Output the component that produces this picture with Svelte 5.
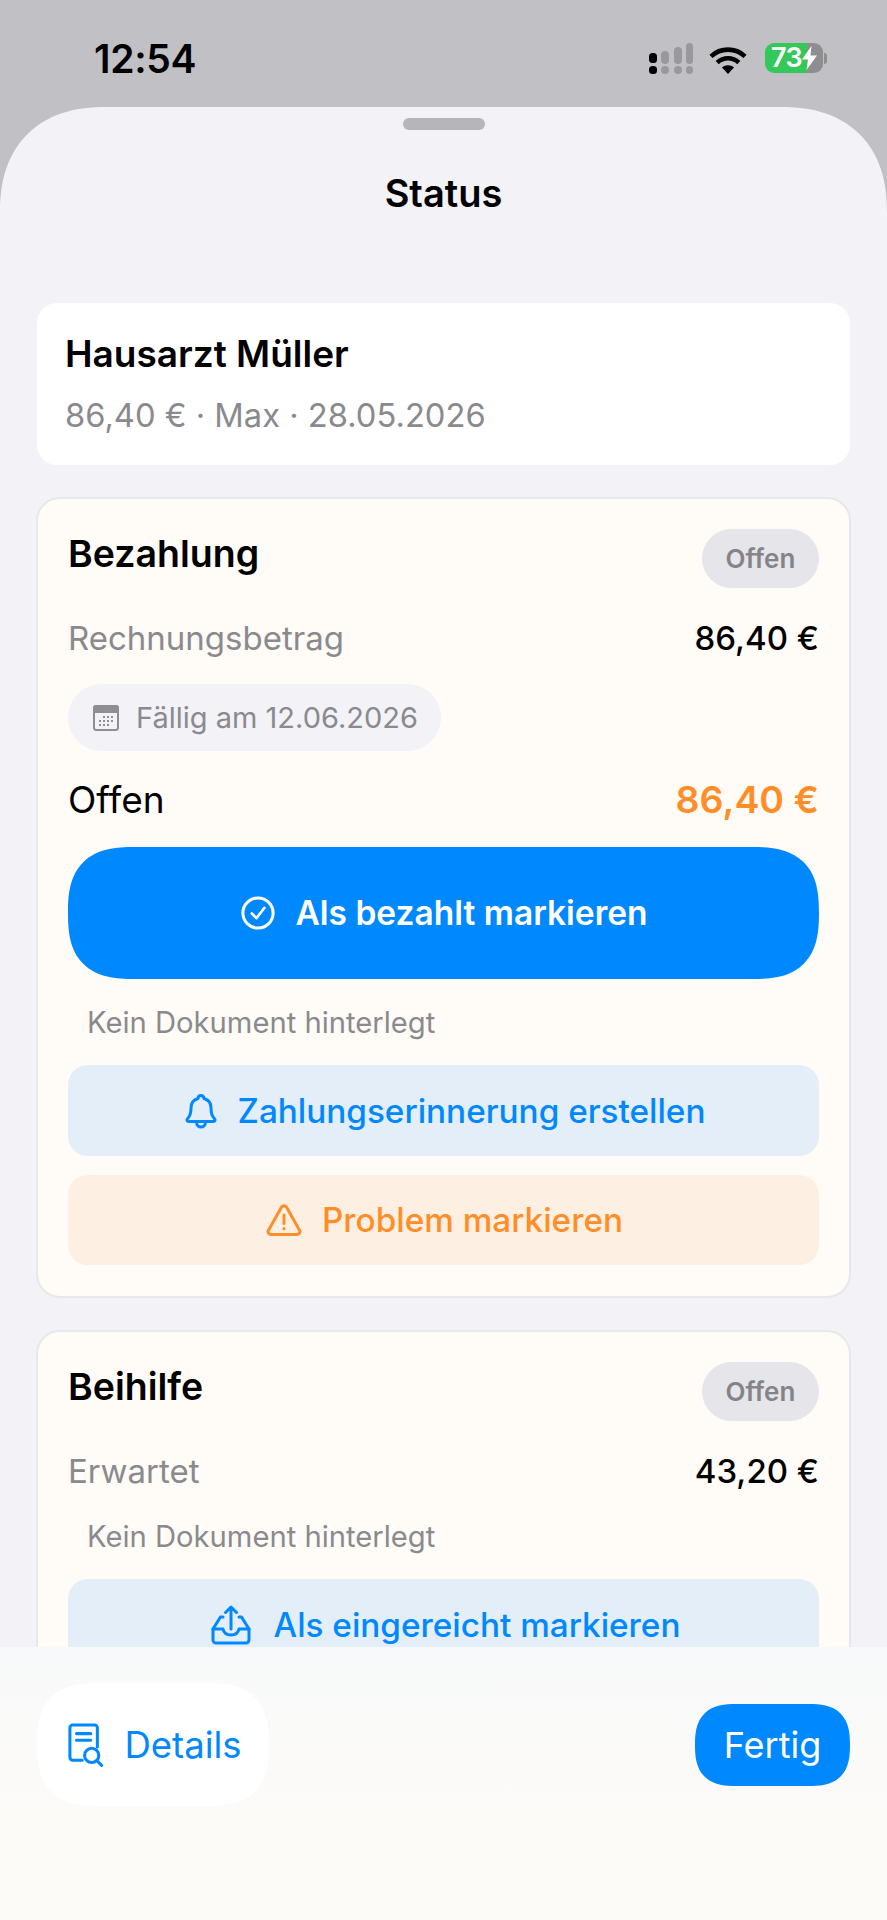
<script lang="ts">
  const blue = '#0088ff';
</script>

<div class="page">
  <header class="status">
    <span class="time">12:54</span>
    <div class="indicators">
      <svg class="signal" width="45" height="32" viewBox="0 0 45 32">
        <g fill="#98989d">
          <rect x="13" y="8" width="8" height="13" rx="4" />
          <rect x="26" y="4" width="8" height="17" rx="4" />
          <rect x="38" y="0" width="7" height="21" rx="3.5" />
          <rect x="13" y="23" width="8" height="8" rx="4" />
          <rect x="26" y="23" width="8" height="8" rx="4" />
          <rect x="38" y="23" width="7" height="8" rx="3.5" />
        </g>
        <g fill="#000">
          <rect x="1" y="10" width="8" height="10" rx="3.5" />
          <rect x="1" y="23" width="8" height="8" rx="3.5" />
        </g>
      </svg>
      <svg class="wifi" width="38" height="27" viewBox="0 0 38 27" fill="none" stroke="#000" stroke-width="4.6">
        <path d="M2 9.4C11.5 .4 26.5 .4 36 9.4" />
        <path d="M8.2 15.6C14.4 9.8 23.6 9.8 29.8 15.6" />
        <path d="M19 27l-6-6.4c3.4-3 8.6-3 12 0z" fill="#000" stroke="none" />
      </svg>
      <div class="battery">
        <div class="battery-body">
          <span class="level">73</span>
          <svg class="bolt" width="15" height="24" viewBox="0 0 15 24"><path d="M9.5 0L0 13.5h6L4.5 24 15 9.5H8.5z" fill="#fff" /></svg>
        </div>
        <span class="nub"></span>
      </div>
    </div>
  </header>

  <main class="sheet">
    <div class="handle"></div>
    <h1>Status</h1>

    <section class="summary">
      <h2>Hausarzt Müller</h2>
      <p>86,40 € · Max · 28.05.2026</p>
    </section>

    <section class="card">
      <div class="card-head">
        <h3>Bezahlung</h3>
        <span class="badge">Offen</span>
      </div>
      <div class="row muted-row">
        <span class="label">Rechnungsbetrag</span>
        <span class="value">86,40 €</span>
      </div>
      <div class="due">
        <svg width="26" height="26" viewBox="0 0 26 26">
          <path d="M3 0h20a3 3 0 0 1 3 3v5H0V3a3 3 0 0 1 3-3z" fill="#8e8e93" />
          <rect x="1" y="1" width="24" height="24" rx="2.5" fill="none" stroke="#8e8e93" stroke-width="2" />
          <g fill="#8e8e93">
            <rect x="10" y="11" width="2" height="2" /><rect x="14" y="11" width="2" height="2" /><rect x="18" y="11" width="2" height="2" />
            <rect x="6" y="15" width="2" height="2" /><rect x="10" y="15" width="2" height="2" /><rect x="14" y="15" width="2" height="2" /><rect x="18" y="15" width="2" height="2" />
            <rect x="6" y="19" width="2" height="2" /><rect x="10" y="19" width="2" height="2" /><rect x="14" y="19" width="2" height="2" />
          </g>
        </svg>
        <span>Fällig am 12.06.2026</span>
      </div>
      <div class="row open-row">
        <span class="open-label">Offen</span>
        <span class="open-value">86,40 €</span>
      </div>
      <button class="primary">
        <svg width="34" height="34" viewBox="0 0 36 36" fill="none" stroke="#fff" stroke-width="3.2" stroke-linecap="round" stroke-linejoin="round">
          <circle cx="18" cy="18" r="16" />
          <path d="M11.5 18.5l4.8 5 8.5-11" stroke-width="2.8" />
        </svg>
        Als bezahlt markieren
      </button>
      <p class="hint">Kein Dokument hinterlegt</p>
      <button class="soft info">
        <svg width="34" height="36" viewBox="0 0 34 36" fill="none" stroke={blue} stroke-width="3" stroke-linecap="round" stroke-linejoin="round">
          <path d="M17 2.5c-1.800 0-3 1.200-3 3-4.600 1.300-7 4.800-7 9.500 0 5-.8 8-3.300 10.500-1 1-1.200 3 1.300 3h24c2.500 0 2.300-2 1.300-3C27.800 23 27 20 27 15c0-4.700-2.400-8.200-7-9.500 0-1.800-1.200-3-3-3z" />
          <path d="M12.500 29c0 3 2 5 4.500 5s4.500-2 4.500-5" />
        </svg>
        Zahlungserinnerung erstellen
      </button>
      <button class="soft warn">
        <svg width="36" height="32" viewBox="0 0 36 32" fill="none" stroke="#ff8d28" stroke-width="3" stroke-linecap="round" stroke-linejoin="round">
          <path d="M15.400 3.300c1.200-2 4-2 5.200 0l12.900 22.900c1.100 2-.3 4.300-2.600 4.300H5.100c-2.300 0-3.700-2.300-2.600-4.300z" />
          <path d="M18 11v8.500" />
          <path d="M18 24.500v.2" />
        </svg>
        Problem markieren
      </button>
    </section>

    <section class="card">
      <div class="card-head">
        <h3>Beihilfe</h3>
        <span class="badge">Offen</span>
      </div>
      <div class="row muted-row">
        <span class="label">Erwartet</span>
        <span class="value">43,20 €</span>
      </div>
      <p class="hint">Kein Dokument hinterlegt</p>
      <button class="soft info submit">
        <svg width="40" height="40" viewBox="0 0 40 40" fill="none" stroke={blue} stroke-width="3" stroke-linecap="round" stroke-linejoin="round">
          <path d="M20 24V2M14.500 7.500L20 2l5.500 5.500" />
          <path d="M12 12H9.500L2 24v11a3 3 0 0 0 3 3h30a3 3 0 0 0 3-3V24l-7.500-12H28" />
          <path d="M2 24h10c.8 4 4 6 8 6s7.200-2 8-6h10" />
        </svg>
        Als eingereicht markieren
      </button>
    </section>
  </main>

  <footer class="bottom">
    <button class="details">
      <svg width="36" height="44" viewBox="0 0 38 46" fill="none" stroke={blue} stroke-width="3.200" stroke-linecap="round" stroke-linejoin="round">
        <path d="M15 39H5a3 3 0 0 1-3-3V5a3 3 0 0 1 3-3h23a3 3 0 0 1 3 3v20" />
        <path d="M9 11h15M9 18h15" />
        <circle cx="25" cy="34" r="7.500" />
        <path d="M31 40l4.500 4.500" />
      </svg>
      Details
    </button>
    <button class="done">Fertig</button>
  </footer>
</div>

<style>
  :global(body) {
    margin: 0;
    background: #c1c0c5;
  }

  .page {
    position: relative;
    width: 887px;
    height: 1920px;
    overflow: hidden;
    background: #c1c0c5;
    font-family: Inter, "Liberation Sans", sans-serif;
    color: #000;
  }

  .status {
    height: 107px;
    box-sizing: border-box;
    padding: 37px 60px 0 94px;
    display: flex;
    justify-content: space-between;
    align-items: flex-start;
  }

  .time {
    font-size: 39px;
    font-weight: 600;
    line-height: 44px;
    letter-spacing: -0.3px;
  }

  .indicators {
    display: flex;
    align-items: flex-start;
    margin-top: 6px;
  }
  .signal { margin-right: 16px; }
  .wifi { margin: 4px 18px 0 0; }

  .battery {
    display: flex;
    align-items: center;
  }
  .battery-body {
    width: 58px;
    height: 30px;
    border-radius: 9px;
    background: linear-gradient(to right, #34c759 72%, #8e8e90 72%);
    display: flex;
    align-items: center;
    box-sizing: border-box;
    padding-left: 6px;
    color: #fff;
  }
  .level {
    font-size: 27px;
    font-weight: 600;
    line-height: 30px;
    letter-spacing: -0.5px;
  }
  .nub {
    width: 3px;
    height: 11px;
    margin-left: 1px;
    border-radius: 0 3px 3px 0;
    background: #8e8e90;
  }

  .sheet {
    background: #f2f2f7;
    border-radius: 105px 105px 0 0;
    corner-shape: superellipse(1.2);
    height: 1813px;
    box-sizing: border-box;
    padding: 11px 37px 0;
  }

  .handle {
    width: 82px;
    height: 12px;
    margin: 0 auto;
    border-radius: 6px;
    background: #b5b5ba;
  }

  h1 {
    margin: 40px 0 0;
    text-align: center;
    font-size: 38px;
    line-height: 46px;
    font-weight: 600;
  }

  .summary {
    margin-top: 87px;
    height: 162px;
    box-sizing: border-box;
    padding: 29px 28px 0;
    background: #fff;
    border-radius: 20px;
  }
  h2 {
    margin: 0;
    font-size: 37px;
    line-height: 44px;
    font-weight: 600;
  }
  .summary p {
    margin: 19px 0 0;
    font-size: 32.7px;
    line-height: 40px;
    color: #8a8a8e;
  }

  .card {
    margin: 32px -1px 0;
    box-sizing: border-box;
    padding: 30px 30px 31px;
    background: #fffbf6;
    border: 2px solid #e8e8ea;
    border-radius: 24px;
  }

  .card-head {
    display: flex;
    justify-content: space-between;
    align-items: center;
    height: 59px;
  }
  h3 {
    margin: 0 0 10px;
    font-size: 37.5px;
    line-height: 44px;
    font-weight: 600;
  }
  .badge {
    width: 117px;
    height: 59px;
    border-radius: 30px;
    background: #e5e5ea;
    color: #848488;
    font-size: 26px;
    font-weight: 600;
    line-height: 59px;
    text-align: center;
  }

  .row {
    display: flex;
    justify-content: space-between;
    align-items: center;
  }
  .muted-row { margin-top: 28px; height: 44px; }
  .label {
    font-size: 33px;
    color: #8a8a8e;
  }
  .value {
    font-size: 33px;
    font-weight: 500;
  }

  .due {
    display: inline-flex;
    align-items: center;
    gap: 17px;
    margin-top: 24px;
    height: 67px;
    box-sizing: border-box;
    padding: 0 23px 0 25px;
    border-radius: 34px;
    background: #f2f2f7;
    color: #8a8a8e;
    font-size: 29px;
    vertical-align: top;
  }

  .open-row { margin-top: 25px; height: 46px; }
  .open-label { font-size: 37px; }
  .open-value {
    font-size: 37.5px;
    font-weight: 600;
    color: #ff8d28;
  }

  button {
    display: flex;
    align-items: center;
    justify-content: center;
    width: 100%;
    border: 0;
    padding: 0;
    font-family: inherit;
  }

  .primary {
    gap: 20px;
    height: 132px;
    margin-top: 25px;
    padding-left: 2px;
    border-radius: 66px;
    corner-shape: superellipse(1.4);
    background: #0088ff;
    color: #fff;
    font-size: 33.5px;
    font-weight: 600;
  }

  .hint {
    margin: 26px 0 0 19px;
    font-size: 29.2px;
    line-height: 36px;
    color: #8a8a8e;
  }

  .soft {
    gap: 20px;
    height: 91px;
    margin-top: 24px;
    padding-left: 2px;
    border-radius: 20px;
    font-size: 33.3px;
    font-weight: 500;
  }
  .info {
    background: #e3eef8;
    color: #0088ff;
  }
  .submit {
    gap: 23px;
    padding-left: 4px;
  }
  .warn {
    height: 90px;
    margin-top: 19px;
    background: #fdf0e3;
    color: #ff8d28;
  }

  .bottom {
    position: absolute;
    left: 0;
    right: 0;
    bottom: 0;
    height: 273px;
    box-sizing: border-box;
    padding: 36px 37px 0;
    display: flex;
    justify-content: space-between;
    align-items: flex-start;
    background: linear-gradient(to bottom, #f8f9fa, #fdfbf8 70%);
  }

  .details {
    gap: 20px;
    width: 232px;
    height: 123px;
    padding-left: 4px;
    border-radius: 62px;
    corner-shape: superellipse(1.4);
    background: #fff;
    color: #0088ff;
    font-size: 36.5px;
    font-weight: 400;
  }

  .done {
    width: 155px;
    height: 82px;
    margin-top: 21px;
    border-radius: 41px;
    corner-shape: superellipse(1.4);
    background: #0088ff;
    color: #fff;
    font-size: 36px;
    font-weight: 400;
  }
</style>
